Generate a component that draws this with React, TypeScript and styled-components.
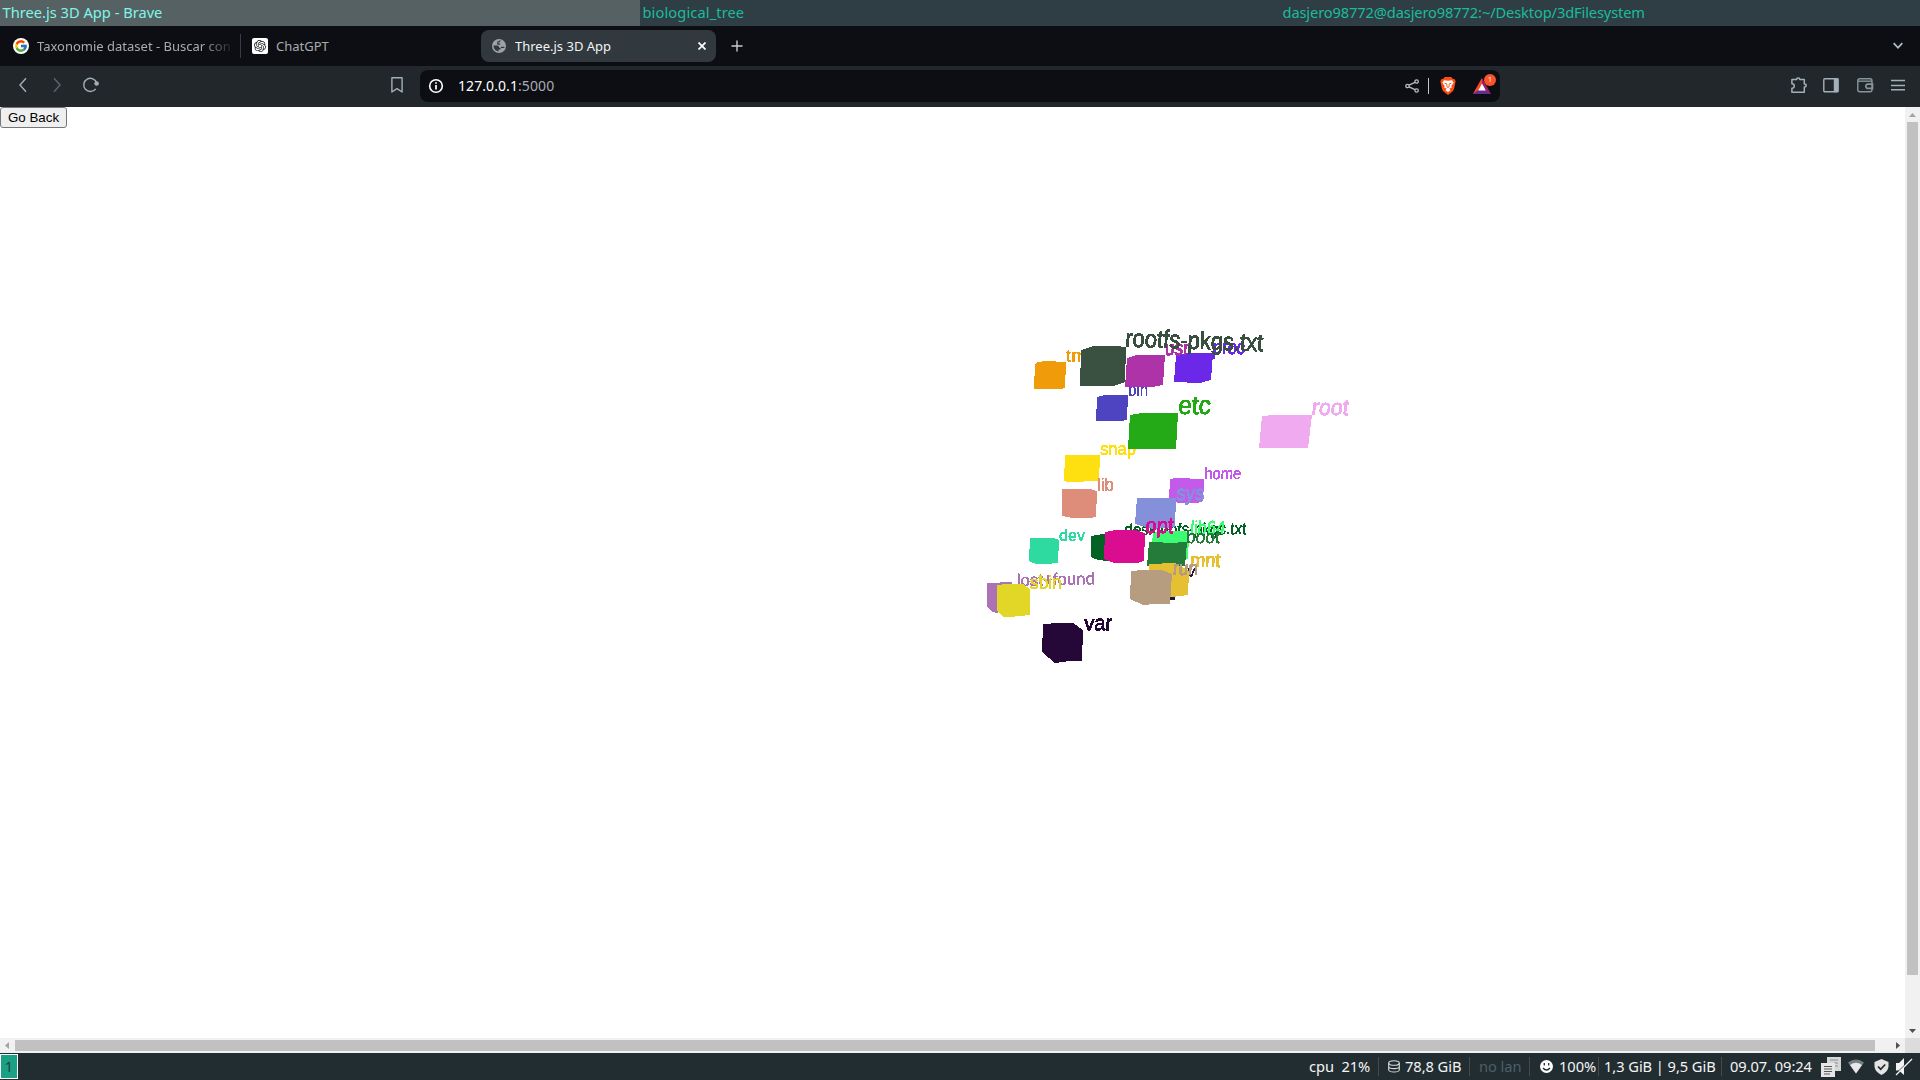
import React from "react";
import styled, { createGlobalStyle } from "styled-components";
import { SiOpenai } from "react-icons/si";
import { FcGoogle } from "react-icons/fc";

const Global = createGlobalStyle`
  html, body { margin: 0; padding: 0; overflow: hidden; }
  * { box-sizing: border-box; }
`;

const Desktop = styled.div`
  width: 1920px;
  height: 1080px;
  display: flex;
  flex-direction: column;
  background: #fff;
  font-family: "Noto Sans", sans-serif;
  white-space: nowrap;
`;

const TitleBar = styled.div`
  height: 26px;
  display: grid;
  grid-template-columns: 640px 640px 640px;
  flex-shrink: 0;
`;

const WindowTitle = styled.div<{ $active?: boolean; $track?: number }>`
  height: 26px;
  padding-left: 2.5px;
  font-size: 14.667px;
  line-height: 25px;
  letter-spacing: ${(p) => p.$track ?? 0}px;
  background: ${(p) => (p.$active ? "#566164" : "#2f3d44")};
  color: ${(p) => (p.$active ? "#80f5e8" : "#1abc9c")};
`;

const TabStrip = styled.div`
  height: 40px;
  flex-shrink: 0;
  display: flex;
  align-items: center;
  background: #0d0e13;
  padding: 0 14px 0 0;
`;

const Tab = styled.div<{ $width: number; $active?: boolean; $inset?: number }>`
  width: ${(p) => p.$width}px;
  height: 32px;
  display: flex;
  align-items: center;
  gap: 8px;
  padding: 0 10px 0 ${(p) => p.$inset ?? 12}px;
  font-size: 13px;
  border-radius: 8px;
  color: ${(p) => (p.$active ? "#f2f3f5" : "#a9abb0")};
  background: ${(p) => (p.$active ? "#31393e" : "transparent")};
`;

const TabLabel = styled.span<{ $fade?: boolean }>`
  flex: 1;
  overflow: hidden;
  ${(p) => p.$fade && "mask-image: linear-gradient(to right, #000 165px, transparent 198px);"}
`;

const TabDivider = styled.div`
  width: 1px;
  height: 24px;
  background: #3a3d42;
`;

const GoogleBadge = styled.div`
  width: 16px;
  height: 16px;
  display: grid;
  place-items: center;
  background: #fff;
  border-radius: 50%;
  flex-shrink: 0;
`;

const GptBadge = styled(GoogleBadge)`
  border-radius: 2px;
  color: #222;
`;

const Spacer = styled.div`
  flex: 1;
`;

const Gap = styled.div<{ $w: number }>`
  width: ${(p) => p.$w}px;
  flex-shrink: 0;
`;

const Toolbar = styled.div`
  height: 41px;
  flex-shrink: 0;
  display: flex;
  align-items: center;
  background: #22272b;
  color: #a2b0b8;
  padding: 0 12px 3px 13px;
`;

const ToolIcon = styled.svg<{ $weight?: number; $tone?: string }>`
  width: 20px;
  height: 20px;
  flex-shrink: 0;
  display: block;
  fill: none;
  stroke: ${(p) => p.$tone ?? "currentColor"};
  stroke-width: ${(p) => p.$weight ?? 1.4};
`;

const AddressBar = styled.div`
  width: 1080px;
  height: 32px;
  display: flex;
  align-items: center;
  background: #0d0e13;
  border-radius: 8px;
  padding: 0 4px 0 6px;
  margin-top: 2px;
  font-size: 14px;
  color: #fff;
`;

const Address = styled.div`
  line-height: 18px;
  letter-spacing: 0.08px;
  padding-bottom: 1px;
`;

const Port = styled.span`
  color: #a9abb0;
`;

const AddressDivider = styled.div`
  width: 1px;
  height: 16px;
  background: #c4c6ca;
`;

const Page = styled.div`
  height: 946px;
  display: grid;
  grid-template-columns: 1905px 15px;
  grid-template-rows: 931px 15px;
`;

const Viewport = styled.div`
  position: relative;
  overflow: hidden;
`;

const BackButton = styled.button`
  display: block;
  width: 67px;
  height: 21px;
  margin: 0;
  padding: 0;
  border: 1px solid #767676;
  border-radius: 3px;
  background: #efefef;
  color: #000;
  font: 13.333px "Liberation Sans", Arial, sans-serif;
`;

const Scene = styled.svg`
  position: absolute;
  left: 0;
  top: 0;
  pointer-events: none;
`;

const SceneLabel = styled.text`
  font-family: "Liberation Sans", Arial, sans-serif;
`;

const VScroll = styled.div`
  background: #f1f1f1;
  display: flex;
  flex-direction: column;
  align-items: center;
`;

const HScroll = styled.div`
  background: #f1f1f1;
  display: flex;
  align-items: center;
`;

const Corner = styled.div`
  background: #dcdcdc;
`;

const Arrow = styled.svg`
  width: 15px;
  height: 15px;
  flex-shrink: 0;
`;

const VThumb = styled.div`
  width: 11px;
  height: 853px;
  background: #c1c1c1;
`;

const HThumb = styled.div`
  width: 1860px;
  height: 11px;
  background: #c1c1c1;
`;

const StatusBar = styled.div`
  height: 27px;
  flex-shrink: 0;
  display: flex;
  align-items: center;
  background: #222d32;
  color: #f4f5f5;
  font-size: 14.667px;
  letter-spacing: -0.06px;
  line-height: 27px;
`;

const Workspace = styled.div`
  width: 18px;
  height: 25px;
  border: 1px solid #fff;
  background: #1aa085;
  color: #22423f;
  text-align: center;
  line-height: 23px;
`;

const Cell = styled.div<{ $w: number; $dim?: boolean }>`
  width: ${(p) => p.$w}px;
  flex-shrink: 0;
  display: flex;
  align-items: center;
  white-space: pre;
  color: ${(p) => (p.$dim ? "#4d5f66" : "inherit")};
`;

const Rule = styled.div`
  width: 1px;
  height: 19px;
  flex-shrink: 0;
  background: #48494a;
`;

type Node = {
  name: string;
  color: string;
  box: string;
  x: number;
  y: number;
  size: number;
  width: number;
  tilt?: number;
  slant?: number;
};

/* Ordered from the farthest node to the nearest. */
const nodes: Node[] = [
  { name: "tmp", color: "#f09c0a", box: "1035,364 1038,362 1046,361 1066,362 1065,388 1060,389 1034,389", x: 1066, y: 362, size: 18.5, width: 32 },
  { name: "proc", color: "#6b28e8", box: "1176,355 1187,353 1213,353 1211,380 1200,383 1174,382", x: 1212.5, y: 354, size: 20, width: 32, slant: -5 },
  { name: "bin", color: "#4e43c0", box: "1097,397 1105,395 1128,395 1127,420 1120,421 1096,421", x: 1128, y: 396, size: 18, width: 20 },
  { name: "usr", color: "#ae32a8", box: "1127,358 1137,355 1165,355 1163,385 1152,387 1125,387", x: 1164.5, y: 355, size: 21, width: 24, slant: -5 },
  { name: "rootfs-pkgs.txt", color: "#3a5040", box: "1081,350 1093,346 1115,346 1126,347 1125,382 1113,386 1080,386", x: 1125, y: 346.5, size: 25, width: 138, tilt: 2, slant: -1 },
  { name: "snap", color: "#fee010", box: "1065,455 1100,455 1099,481 1068,482 1064,481", x: 1100, y: 455, size: 19, width: 36 },
  { name: "etc", color: "#23aa16", box: "1130,415 1142,413 1178,413 1176,449 1128,449", x: 1178, y: 413.5, size: 26, width: 32.5, slant: -3 },
  { name: "root", color: "#f0abf0", box: "1262,416 1275,415 1312,415 1308,448 1259,448", x: 1311, y: 415, size: 23, width: 37, slant: -7 },
  { name: "lib", color: "#dd8d7a", box: "1062,489 1090,489 1097,491 1096,517 1089,518 1072,518 1062,516", x: 1097, y: 490.5, size: 18, width: 17 },
  { name: "home", color: "#c35aea", box: "1170,479 1175,478 1204,479 1203,501 1198,503 1178,503 1169,499", x: 1204, y: 479, size: 16.5, width: 37, slant: -3 },
  { name: "desktopfs-pkgs.txt", color: "#036324", box: "1091,536 1103,534 1108,534 1108,561 1098,560 1091,557", x: 1124, y: 535, size: 16.5, width: 122, slant: -4, tilt: -0.4 },
  { name: "sys", color: "#8491da", box: "1137,498 1176,498 1175,527 1153,529 1135,524", x: 1176, y: 499.5, size: 21, width: 28, slant: -4 },
  { name: "lib64", color: "#3cfc72", box: "1153,533 1160,531 1185,531 1189,535 1188,559 1150,561", x: 1190, y: 534, size: 19, width: 35, slant: -4 },
  { name: "dev", color: "#2edaa0", box: "1030,538 1054,538 1059,540 1058,563 1046,564 1036,564 1029,561", x: 1059, y: 540.5, size: 17, width: 26 },
  { name: "boot", color: "#257c3a", box: "1149,542 1158,542 1168,543 1187,542 1185,566 1147,566", x: 1185.5, y: 543, size: 18, width: 34, slant: -5 },
  { name: "opt", color: "#da0c90", box: "1105,532 1115,530 1135,530 1145,533 1144,561 1137,563 1114,563 1104,559", x: 1145, y: 533, size: 22, width: 28, slant: -4 },
  { name: "srv", color: "#2a1740", box: "1165,590 1175,590 1175,600 1165,600", x: 1173, y: 577, size: 17, width: 22, slant: -5 },
  { name: "mnt", color: "#e6c033", box: "1149,564 1175,563 1189,571 1188,595 1172,597 1149,597", x: 1190, y: 567, size: 20, width: 30, slant: -3 },
  { name: "run", color: "#b69d80", box: "1131,571 1143,570 1162,570 1172,574 1170,604 1154,604 1143,605 1130,599", x: 1172.5, y: 574.5, size: 20, width: 25, slant: -4 },
  { name: "lost+found", color: "#ac72b6", box: "987,583 1012,582 1013,600 997,613 993,612 987,607", x: 1017, y: 586, size: 17, width: 78, tilt: -1.3 },
  { name: "sbin", color: "#e2d627", box: "997,585 1007,584 1023,584 1030,589 1030,615 1010,617 1003,617 997,611", x: 1030, y: 589, size: 19, width: 32, tilt: -1 },
  { name: "var", color: "#250837", box: "1043,624 1059,623 1073,623 1083,630 1082,661 1069,661 1055,663 1042,652", x: 1084, y: 630.5, size: 21.5, width: 28, tilt: -1, slant: -3 },
];

function FileScene() {
  return (
    <Scene width="1905" height="931" viewBox="0 107 1905 931" shapeRendering="crispEdges">
      <defs>
        <filter id="hard" x="-10%" y="-20%" width="120%" height="140%" colorInterpolationFilters="sRGB">
          <feComponentTransfer>
            <feFuncA type="discrete" tableValues="0 1 1" />
          </feComponentTransfer>
        </filter>
      </defs>
      {nodes.map((n) => (
        <g key={n.name} fill={n.color}>
          <polygon points={n.box} />
          <g filter="url(#hard)">
            <SceneLabel
              transform={`translate(${n.x} ${n.y}) rotate(${n.tilt ?? 0}) skewX(${n.slant ?? 0})`}
              fontSize={n.size}
              textLength={n.width}
              lengthAdjust="spacingAndGlyphs"
              stroke={n.color}
              strokeWidth={n.size > 19 ? 0.5 : 0.12}
            >
              {n.name}
            </SceneLabel>
          </g>
        </g>
      ))}
    </Scene>
  );
}

export default function App() {
  return (
    <Desktop>
      <Global />
      <TitleBar>
        <WindowTitle $active>Three.js 3D App - Brave</WindowTitle>
        <WindowTitle $track={0.1}>biological_tree</WindowTitle>
        <WindowTitle $track={-0.13}>dasjero98772@dasjero98772:~/Desktop/3dFilesystem</WindowTitle>
      </TitleBar>

      <TabStrip>
        <Tab $width={240} $inset={13}>
          <GoogleBadge><FcGoogle size={14} /></GoogleBadge>
          <TabLabel $fade>Taxonomie dataset - Buscar con</TabLabel>
        </Tab>
        <TabDivider />
        <Tab $width={240} $inset={11}>
          <GptBadge><SiOpenai size={12} /></GptBadge>
          <TabLabel>ChatGPT</TabLabel>
        </Tab>
        <Tab $width={235} $active $inset={11}>
          <svg width="15" height="14" viewBox="0 0 15 14">
            <circle cx="7" cy="7" r="7" fill="#9ea2ab" />
            <path d="M1.4 6.6H5.2Q7.4 6.8 7.2 8.8H8.6V10.6H6.6V12.5Q2 11.9 1.4 6.6Z" fill="#31393e" />
            <path d="M8.2 1.4Q7.8 3.2 5.8 3.2V5.2H8.2M9 8.3H12.4" fill="none" stroke="#31393e" strokeWidth="1.2" />
          </svg>
          <TabLabel>Three.js 3D App</TabLabel>
          <svg width="8" height="8" viewBox="0 0 8 8" stroke="#fff" strokeWidth="1.7"><path d="M.5 .5 7.5 7.5M7.5 .5.5 7.5" /></svg>
        </Tab>
        <Gap $w={15} />
        <svg width="12" height="12" viewBox="0 0 12 12" stroke="#c8cace" strokeWidth="1.4"><path d="M6 .5V11.5M.5 6H11.5" /></svg>
        <Spacer />
        <svg width="16" height="16" viewBox="0 0 16 16" fill="none" stroke="#b0bcc4" strokeWidth="1.8"><path d="M3.7 5.2 8 9.8 12.3 5.2" /></svg>
      </TabStrip>

      <Toolbar>
        <ToolIcon viewBox="0 0 20 20"><path d="M13 3.2 7 10l6 6.8" /></ToolIcon>
        <Gap $w={14} />
        <ToolIcon viewBox="0 0 20 20" opacity={0.45}><path d="M7 3.2 13 10l-6 6.8" /></ToolIcon>
        <Gap $w={13} />
        <ToolIcon viewBox="0 0 20 20"><path d="M15.7 13.8A6.6 6.6 0 1 1 16.7 8" /><circle cx="16.6" cy="8.5" r="1.6" fill="currentColor" /></ToolIcon>
        <Gap $w={287} />
        <ToolIcon viewBox="0 0 20 20"><path d="M4.9 2.7H15.1V17L10 13.6 4.9 17Z" strokeLinejoin="round" /></ToolIcon>
        <Gap $w={13} />
        <AddressBar>
          <ToolIcon viewBox="0 0 20 20"><circle cx="10" cy="10" r="6.3" strokeWidth="1.6" /><path d="M10 9v4.5M10 6.2V7.8" strokeWidth="1.7" /></ToolIcon>
          <Gap $w={12} />
          <Address>127.0.0.1<Port>:5000</Port></Address>
          <Spacer />
          <ToolIcon viewBox="0 0 20 20" $tone="#b9bbbf" $weight={1.3}><circle cx="5.5" cy="10" r="1.7" /><circle cx="14.6" cy="5.5" r="1.7" /><circle cx="14.6" cy="14.5" r="1.7" /><path d="M7 9.1 13 6.3M7 10.9l6 2.8" /></ToolIcon>
          <Gap $w={6} />
          <AddressDivider />
          <Gap $w={11} />
          <svg width="16" height="18" viewBox="0 0 16 18">
            <path d="M4.8 0H11.2L12.7 1.7 14.8 2.2 15.6 4.5 14 12 12.8 14.3 8 18 3.2 14.3 2 12 .4 4.5 1.2 2.2 3.3 1.7Z" fill="#fb4f14" />
            <path d="M8 3.8 12 3.2 13.6 5.8 11.3 9 11.7 10.8 9.3 11.6 10.5 13.2 8 15 5.5 13.2 6.7 11.6 4.3 10.8 4.7 9 2.4 5.8 4 3.2Z" fill="#fff" />
            <path d="M4.5 6.2 6.7 6.8 7 9.8 8 10.5 9 9.8 9.3 6.8 11.5 6.2" fill="none" stroke="#fb4f14" strokeWidth=".9" />
          </svg>
          <Gap $w={16} />
          <svg width="24" height="24" viewBox="0 0 24 24">
            <path d="M10 4 1 20H19Z" fill="#9e1f63" />
            <path d="M10 4 1 20 6.2 16.2 10 10Z" fill="#ff4724" />
            <path d="M1 20H19L13.8 16.2H6.2Z" fill="#662d91" />
            <path d="M10 9.5 6.2 16.5H13.8Z" fill="#fff" />
            <circle cx="18" cy="6" r="6" fill="#fb542b" />
            <text x="18" y="8.4" fontSize="7" fill="#fff" textAnchor="middle">1</text>
          </svg>
        </AddressBar>
        <Spacer />
        <ToolIcon viewBox="0 0 20 20" $weight={1.5}><path d="M2.9 4.6H7.6Q7.6 2.9 9.2 2.9T10.8 4.6H15.3V8.9Q17.2 8.9 17.2 10.4T15.3 12V17.2H2.9V13.3Q5.3 13.3 5.3 11T2.9 8.7Z" strokeLinejoin="round" /></ToolIcon>
        <Gap $w={13} />
        <ToolIcon viewBox="0 0 20 20"><rect x="1.8" y="3.7" width="14.2" height="13" rx="1" /><path d="M12.5 3.9H15.8V16.5H12.5Z" fill="currentColor" /></ToolIcon>
        <Gap $w={13} />
        <ToolIcon viewBox="0 0 20 20" opacity={0.8}><rect x="2.8" y="3.7" width="14.2" height="13" rx="2" /><path d="M3 6.2H17" /><path d="M17.5 9.2H13a2 2 0 0 0 0 4.2H17.5Z" strokeWidth="1.7" /></ToolIcon>
        <Gap $w={13} />
        <ToolIcon viewBox="0 0 20 20"><path d="M3 5.5H17M3 10.5H17M3 14.8H17" /></ToolIcon>
      </Toolbar>

      <Page>
        <Viewport>
          <BackButton>Go Back</BackButton>
          <FileScene />
        </Viewport>
        <VScroll>
          <Arrow viewBox="0 0 15 15"><path d="M4 10 7.5 6 11 10Z" fill="#a3a3a3" /></Arrow>
          <VThumb />
          <Spacer />
          <Arrow viewBox="0 0 15 15"><path d="M4 6H11L7.5 10Z" fill="#505050" /></Arrow>
        </VScroll>
        <HScroll>
          <Arrow viewBox="0 0 15 15"><path d="M9 4V11L5 7.5Z" fill="#a3a3a3" /></Arrow>
          <HThumb />
          <Spacer />
          <Arrow viewBox="0 0 15 15"><path d="M6 4V11L10 7.5Z" fill="#505050" /></Arrow>
        </HScroll>
        <Corner />
      </Page>

      <StatusBar>
        <Workspace>1</Workspace>
        <Spacer />
        <Cell $w={69}>{"cpu  21%"}</Cell>
        <Rule />
        <Gap $w={9} />
        <Cell $w={81}>
          <svg width="12" height="13" viewBox="0 0 12 13" fill="none" stroke="#d8dadb" strokeWidth="1.1"><ellipse cx="6" cy="3" rx="5.3" ry="2.3" /><path d="M.7 3V10Q1 12 6 12T11.3 10V3M.7 6.5Q1 8.6 6 8.6T11.3 6.5" /></svg>
          <Gap $w={5} />78,8 GiB
        </Cell>
        <Rule />
        <Gap $w={9} />
        <Cell $w={50} $dim>no lan</Cell>
        <Rule />
        <Gap $w={10} />
        <Cell $w={58}>
          <svg width="13" height="13" viewBox="0 0 13 13"><circle cx="6.5" cy="6.5" r="6.5" fill="#fff" /><path d="M4.3 3V5.5M8.7 3V5.5M3 8Q6.5 12 10 8" fill="none" stroke="#222d32" strokeWidth="1.3" /></svg>
          <Gap $w={6} />100%
        </Cell>
        <Rule />
        <Gap $w={5} />
        <Cell $w={117}>1,3 GiB | 9,5 GiB</Cell>
        <Rule />
        <Gap $w={8} />
        <Cell $w={91}>09.07. 09:24</Cell>
        <svg width="20" height="20" viewBox="0 0 20 20">
          <path d="M6 0H20V14H6Z" fill="#d4d6d7" /><path d="M9 3H17M13 6H17M13 9H17" stroke="#8c8f90" />
          <path d="M0 6H14V20H0Z" fill="#e6e6e6" /><path d="M3 9.5H11M3 12H11M3 14.5H11M3 17H9" stroke="#55595b" />
        </svg>
        <Gap $w={7} />
        <svg width="16" height="15" viewBox="0 0 16 15"><path d="M8 14.5 0 3.5Q8-2.5 16 3.5Z" fill="#777f82" /><path d="M8 14.5 2 6Q8 1.5 14 6Z" fill="#e8e8e8" /></svg>
        <Gap $w={10} />
        <svg width="15" height="16" viewBox="0 0 15 16"><path d="M7.5 0 14.5 3V7.5Q14 13 7.5 16 1 13 .5 7.5V3Z" fill="#e4e4e4" /><path d="M4 7.5 6.7 10.3 11.2 5.5" fill="none" stroke="#222d32" strokeWidth="1.8" /></svg>
        <Gap $w={6} />
        <svg width="18" height="20" viewBox="0 0 18 20"><path d="M1 6H4L9 1V18L4 13.5H1Z" fill="#f2f2f2" /><path d="M0 17.5 17 1" stroke="#222d32" strokeWidth="1" /><path d="M1 18 17 2" stroke="#f2f2f2" strokeWidth="1.2" /></svg>
        <Gap $w={7} />
      </StatusBar>
    </Desktop>
  );
}
